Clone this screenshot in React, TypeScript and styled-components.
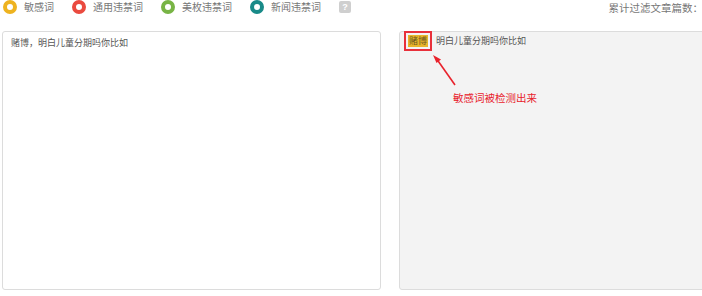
import React from "react";
import styled, { createGlobalStyle } from "styled-components";

const Global = createGlobalStyle`
  html, body { margin: 0; padding: 0; background: #fff; }
  body { font-family: "Noto Sans CJK SC", "Noto Sans", sans-serif; overflow: hidden; }
`;

const Page = styled.div`
  width: 702px;
  height: 296px;
  display: flex;
  flex-direction: column;
  overflow: hidden;
`;

const TopBar = styled.div`
  height: 14px;
  display: flex;
  align-items: center;
  justify-content: space-between;
  padding-left: 3px;
  margin-bottom: 17px;
`;

const Legend = styled.div`
  display: flex;
  align-items: center;
`;

const LegendItem = styled.div`
  display: flex;
  align-items: center;
  margin-right: 18px;
  font-size: 10px;
  color: #777;
  line-height: 14px;
`;

const Ring = styled.span<{ $c: string }>`
  width: 14px;
  height: 14px;
  box-sizing: border-box;
  border-radius: 50%;
  border: 4px solid ${(p) => p.$c};
  background: #fff;
  margin-right: 7px;
`;

const Help = styled.span`
  width: 12px;
  height: 12px;
  border-radius: 2px;
  background: #cfcfcf;
  color: #fff;
  font-size: 9px;
  font-family: "Liberation Sans", sans-serif;
  font-weight: bold;
  display: flex;
  align-items: center;
  justify-content: center;
`;

const Counter = styled.div`
  font-size: 10.5px;
  color: #777;
  margin-right: -1px;
`;

const Panels = styled.div`
  display: flex;
  gap: 18px;
  padding-left: 2px;
  height: 259px;
`;

const Panel = styled.div<{ $gray?: boolean }>`
  position: relative;
  box-sizing: border-box;
  flex: ${(p) => (p.$gray ? "0 0 310px" : "0 0 379px")};
  border: 1px solid #dcdcdc;
  border-radius: 3px;
  background: ${(p) => (p.$gray ? "#f3f3f3" : "#fff")};
  padding: ${(p) => (p.$gray ? "0 4px" : "4px 8px")};
  font-size: 9px;
  color: #555;
`;

const Line = styled.div`
  display: flex;
  align-items: center;
  line-height: 12px;
  margin-top: -1px;
`;

const Hit = styled.span`
  border: 2px solid #e8303a;
  padding: 2px 2px;
  margin-right: 4px;
  display: inline-flex;
`;

const Mark = styled.span`
  background: #e9b52a;
  color: #6a5520;
  padding: 0 1px;
  line-height: 12px;
`;

const Note = styled.div`
  position: absolute;
  left: 53px;
  top: 58px;
  font-size: 10.5px;
  color: #e8222c;
`;

const Arrow = styled.svg`
  position: absolute;
  left: 30px;
  top: 20px;
`;

export default function App() {
  const items = [
    { c: "#eeb320", t: "敏感词" },
    { c: "#ea4a3f", t: "通用违禁词" },
    { c: "#78b445", t: "美枚违禁词" },
    { c: "#198a88", t: "新闻违禁词" },
  ];
  return (
    <>
      <Global />
      <Page>
        <TopBar>
          <Legend>
            {items.map((i) => (
              <LegendItem key={i.t}>
                <Ring $c={i.c} />
                {i.t}
              </LegendItem>
            ))}
            <Help>?</Help>
          </Legend>
          <Counter>累计过滤文章篇数：</Counter>
        </TopBar>
        <Panels>
          <Panel>赌博，明白儿童分期吗你比如</Panel>
          <Panel $gray>
            <Line>
              <Hit>
                <Mark>赌博</Mark>
              </Hit>
              明白儿童分期吗你比如
            </Line>
            <Arrow width="40" height="40" viewBox="0 0 40 40">
              <line x1="25" y1="33" x2="6" y2="6" stroke="#e8222c" strokeWidth="1.6" />
              <polygon points="3,3 11,7.5 6.5,11" fill="#e8222c" />
            </Arrow>
            <Note>敏感词被检测出来</Note>
          </Panel>
        </Panels>
      </Page>
    </>
  );
}
